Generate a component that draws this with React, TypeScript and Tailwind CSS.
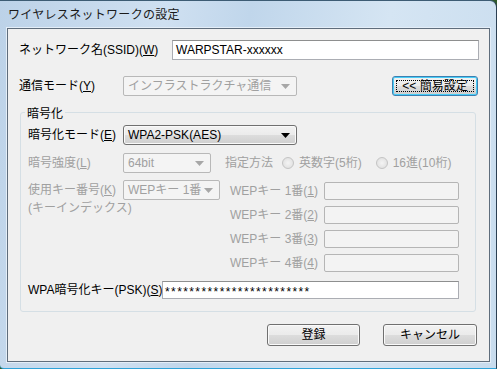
import React from "react";

const font = "font-['Liberation_Sans','Noto_Sans_CJK_JP',sans-serif]";

function U({ c }: { c: string }) {
  return <span className="underline underline-offset-[1px]">{c}</span>;
}

function Arrow({ disabled }: { disabled?: boolean }) {
  return (
    <svg width="9" height="5" viewBox="0 0 9 5" className="shrink-0">
      <path d="M0 0h9L4.5 5z" fill={disabled ? "#a7a7a7" : "#000"} />
    </svg>
  );
}

function Combo({ w, text, disabled }: { w: string; text: string; disabled?: boolean }) {
  return disabled ? (
    <div className={`${w} h-[20px] flex items-center justify-between pl-[4px] pr-[6px] rounded-[2px] border border-[#b8b8b8] bg-[#f4f4f4] text-[#a0a0a0]`}>
      <span className="whitespace-nowrap">{text}</span>
      <Arrow disabled />
    </div>
  ) : (
    <div className={`${w} h-[20px] flex items-center justify-between pl-[4px] pr-[6px] rounded-[3px] border border-[#707070] bg-[linear-gradient(to_bottom,#f2f2f2_0%,#ebebeb_50%,#dddddd_50%,#cfcfcf_100%)] shadow-[inset_0_0_0_1px_#fafafa] text-black`}>
      <span className="whitespace-nowrap">{text}</span>
      <Arrow />
    </div>
  );
}

function KeyBox({ w }: { w: string }) {
  return <div className={`${w} h-[18px] rounded-[2px] border border-[#b5b5b5] bg-[#f3f3f3]`} />;
}

function Radio() {
  return <div className="w-[12px] h-[12px] rounded-full border border-[#c4c4c4] bg-[radial-gradient(circle,#f4f4f4,#dcdcdc)]" />;
}

function Btn({ w, children, focus }: { w: string; children: React.ReactNode; focus?: boolean }) {
  return (
    <div
      className={`${w} relative flex items-center justify-center rounded-[3px] border bg-[linear-gradient(to_bottom,#f2f2f2_0%,#ebebeb_50%,#dddddd_50%,#cfcfcf_100%)] ${
        focus ? "border-[#3c7fb1] shadow-[inset_0_0_0_1px_#47cdf7]" : "border-[#707070] shadow-[inset_0_0_0_1px_#fafafa]"
      }`}
    >
      {focus && <div className="absolute inset-[3px] border border-dotted border-black" />}
      <span className="relative">{children}</span>
    </div>
  );
}

export default function App() {
  return (
    <div className={`relative w-[497px] h-[369px] bg-[#2f5a2a] text-[12px] leading-none text-black ${font}`}>
      <div className="w-[497px] h-[369px] flex flex-col rounded-tr-[7px] rounded-bl-[4px] border-t border-r border-b border-t-[#3d5c74] border-r-[#2b3f52] border-b-[#2fa3da] bg-[linear-gradient(100deg,#bcd2e8_0%,#cfe0f1_30%,#c0d6eb_45%,#d5e5f3_70%,#c8dcee_100%)]">
        <div className="h-[27px] flex items-center pl-[8px] pt-[1px] text-[12px] text-[#1a1a1a] tracking-[0.3px]">
          ワイヤレスネットワークの設定
        </div>
        <div className="ml-[7px] mr-[6px] h-[334px] border border-[#5f6d7c] bg-[#f0f0f0] flex flex-col shadow-[0_0_0_1px_#e4eef8]">
          {/* SSID */}
          <div className="flex items-center mt-[11px] pl-[11px] pr-[10px]">
            <div className="w-[153px] whitespace-nowrap">
              ネットワーク名(SSID)(<U c="W" />)
            </div>
            <div className="flex-1 h-[20px] border border-[#abadb3] border-t-[#8e8f8f] bg-white flex items-center pl-[3px]">
              WARPSTAR-xxxxxx
            </div>
          </div>

          {/* mode */}
          <div className="flex items-center mt-[16px] pl-[11px] pr-[11px]">
            <div className="w-[104px] whitespace-nowrap">
              通信モード(<U c="Y" />)
            </div>
            <Combo w="w-[174px]" text="インフラストラクチャ通信" disabled />
            <div className="ml-auto flex h-[20px]">
              <Btn w="w-[86px]" focus>
                &lt;&lt; 簡易設定
              </Btn>
            </div>
          </div>

          {/* group */}
          <div className="relative mt-[16px] ml-[12px] w-[456px] h-[200px] rounded-[3px] border border-[#d5dfe5] pl-[7px] pt-[12px]">
            <div className="absolute -top-[5px] left-[4px] px-[2px] bg-[#f0f0f0]">暗号化</div>

            <div className="flex items-center">
              <div className="w-[95px] whitespace-nowrap">
                暗号化モード(<U c="E" />)
              </div>
              <Combo w="w-[174px]" text="WPA2-PSK(AES)" />
            </div>

            <div className="flex items-center mt-[8px] text-[#a0a0a0]">
              <div className="w-[95px] whitespace-nowrap">
                暗号強度(<U c="L" />)
              </div>
              <Combo w="w-[88px]" text="64bit" disabled />
              <div className="ml-[14px] whitespace-nowrap">指定方法</div>
              <div className="ml-[9px] flex items-center gap-[5px]">
                <Radio />
                <span>英数字(5桁)</span>
              </div>
              <div className="ml-[14px] flex items-center gap-[5px]">
                <Radio />
                <span>16進(10桁)</span>
              </div>
            </div>

            <div className="flex mt-[7px] text-[#a0a0a0]">
              <div className="w-[202px]">
                <div className="flex items-center">
                  <div className="w-[95px] whitespace-nowrap">
                    使用キー番号(<U c="K" />)
                  </div>
                  <Combo w="w-[97px]" text="WEPキー 1番" disabled />
                </div>
                <div className="mt-[2px] whitespace-nowrap">(キーインデックス)</div>
              </div>
              <div className="flex flex-col gap-[6px] pt-[2px]">
                {["1", "2", "3", "4"].map((n) => (
                  <div key={n} className="flex items-center">
                    <div className="w-[94px] whitespace-nowrap">
                      WEPキー {n}番(<U c={n} />)
                    </div>
                    <KeyBox w="w-[135px]" />
                  </div>
                ))}
              </div>
            </div>

            <div className="flex items-center mt-[9px]">
              <div className="w-[134px] whitespace-nowrap">
                WPA暗号化キー(PSK)(<U c="S" />)
              </div>
              <div className="w-[297px] h-[18px] border border-[#abadb3] border-t-[#8e8f8f] bg-white flex items-center pl-[2px] pt-[3px] tracking-[1.4px]">
                ************************
              </div>
            </div>
          </div>

          {/* buttons */}
          <div className="flex justify-end gap-[23px] mt-[12px] pr-[12px] h-[22px]">
            <Btn w="w-[93px]">登録</Btn>
            <Btn w="w-[94px]">キャンセル</Btn>
          </div>
        </div>
      </div>
    </div>
  );
}
